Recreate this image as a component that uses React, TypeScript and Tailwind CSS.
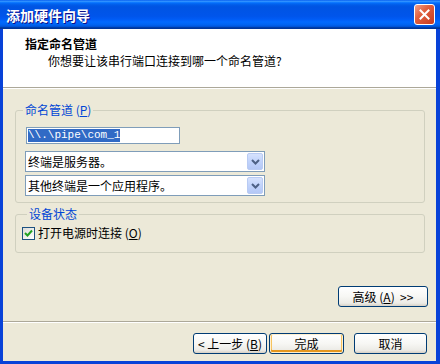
import React from "react";

const font = { fontFamily: '"Noto Sans CJK SC", "Noto Sans", sans-serif' };

function Btn({ children, w, def }: { children: React.ReactNode; w: string; def?: boolean }) {
  return (
    <div
      className={`${w} h-[21px] flex items-center justify-center rounded-[3px] border border-[#003C74] bg-[linear-gradient(to_bottom,#FFFFFF_0%,#F7F7F4_50%,#ECEBE6_85%,#D6D0C5_100%)] text-[12px] leading-[14px] text-black ${
        def ? "shadow-[inset_0_0_0_1px_#FFF0CF,inset_0_-2px_0_1px_#E5971F,inset_2px_0_0_0_#F6C35F,inset_-2px_0_0_0_#F6C35F]" : ""
      }`}
    >
      {children}
    </div>
  );
}

function Combo({ text }: { text: string }) {
  return (
    <div className="w-[240px] h-[21px] border border-[#7F9DB9] bg-white flex items-center justify-between pl-[2px] pr-[1px]">
      <span className="text-[12px] leading-[14px] text-black">{text}</span>
      <div className="w-[16px] h-[17px] rounded-[2px] border border-[#B9CBF3] bg-[linear-gradient(to_bottom,#D6E2FD_0%,#C1D3FB_50%,#B4C8F6_100%)] flex items-center justify-center">
        <svg width="9" height="6" viewBox="0 0 9 6">
          <path d="M1 1 L4.5 4.5 L8 1" stroke="#4D6185" strokeWidth="2" fill="none" />
        </svg>
      </div>
    </div>
  );
}

export default function App() {
  return (
    <div className="w-[440px] h-[364px] flex flex-col bg-[#0842D8]" style={font}>
      {/* Title bar */}
      <div className="h-[29px] flex items-center justify-between pl-[6px] pr-[5px] bg-[linear-gradient(to_bottom,#0058EE_0%,#3593FF_4%,#288EFF_6%,#127DFF_8%,#036FFC_10%,#0262EE_14%,#0057E5_20%,#0054E3_24%,#0055EB_56%,#005BF5_66%,#026AFE_76%,#0062EF_86%,#0052D6_92%,#0040AB_94%,#003092_100%)]">
        <span className="text-white font-bold text-[14px] leading-[16px] [text-shadow:1px_1px_#0F1089]">添加硬件向导</span>
        <div className="w-[21px] h-[21px] rounded-[3px] border border-white bg-[linear-gradient(135deg,#F0A08A_0%,#E0603F_40%,#C8391E_100%)] flex items-center justify-center">
          <svg width="11" height="11" viewBox="0 0 11 11">
            <path d="M1.5 1.5 L9.5 9.5 M9.5 1.5 L1.5 9.5" stroke="white" strokeWidth="2" strokeLinecap="square" />
          </svg>
        </div>
      </div>

      {/* Client */}
      <div className="flex-1 ml-[3px] mr-[4px] mb-[3px] bg-[#ECE9D8] flex flex-col">
        {/* Header */}
        <div className="h-[58px] bg-white pl-[22px] pt-[7px] flex flex-col">
          <div className="text-[12px] leading-[16px] font-bold text-black">指定命名管道</div>
          <div className="text-[12px] leading-[16px] text-black ml-[23px] mt-[1px]">你想要让该串行端口连接到哪一个命名管道?</div>
        </div>
        <div className="h-[1px] bg-[#ACA899]" />
        <div className="h-[1px] bg-white" />

        {/* Group 1 */}
        <fieldset className="mt-[14px] ml-[12px] mr-[11px] border border-[#D0D0BF] rounded-[3px] pl-[10px] pb-[6px]">
          <legend className="ml-[-3px] px-[2px] text-[12px] leading-[14px] text-[#0046D5]">
            命名管道 (<u>P</u>)
          </legend>
          <div className="mt-[10px] w-[154px] h-[17px] border border-[#7F9DB9] bg-white flex items-center pl-[1px]">
            <span className="bg-[#316AC5] text-white text-[11px] leading-[13px]" style={{ fontFamily: '"Liberation Mono", monospace' }}>
              {"\\\\.\\pipe\\com_1"}
            </span>
          </div>
          <div className="mt-[7px] ml-[-1px]">
            <Combo text="终端是服务器。" />
          </div>
          <div className="mt-[3px] ml-[-1px]">
            <Combo text="其他终端是一个应用程序。" />
          </div>
        </fieldset>

        {/* Group 2 */}
        <fieldset className="mt-[4px] ml-[12px] mr-[11px] border border-[#D0D0BF] rounded-[3px] pl-[6px] pb-[12px]">
          <legend className="ml-[5px] px-[2px] text-[12px] leading-[14px] text-[#0046D5]">设备状态</legend>
          <div className="mt-[5px] flex items-center gap-[3px]">
            <div className="w-[13px] h-[13px] border border-[#1C5180] bg-[linear-gradient(135deg,#DCDCD7_0%,#FFFFFF_100%)] flex items-center justify-center">
              <svg width="9" height="9" viewBox="0 0 9 9">
                <path d="M1 4 L3.5 6.5 L8 1.5" stroke="#21A121" strokeWidth="2" fill="none" />
              </svg>
            </div>
            <span className="text-[12px] leading-[14px] text-black">
              打开电源时连接 (<u>O</u>)
            </span>
          </div>
        </fieldset>

        <div className="flex-1" />

        <div className="flex justify-end pr-[8px]">
          <Btn w="w-[90px]">
            高级 (<u>A</u>)&nbsp;&nbsp;&gt;&gt;
          </Btn>
        </div>

        <div className="mt-[14px] h-[1px] bg-[#ACA899]" />
        <div className="h-[1px] bg-white" />

        <div className="mt-[10px] mb-[7px] flex justify-end pr-[9px]">
          <Btn w="w-[74px]">
            &lt; 上一步 (<u>B</u>)
          </Btn>
          <div className="w-[2px]" />
          <Btn w="w-[75px]" def>
            完成
          </Btn>
          <div className="w-[10px]" />
          <Btn w="w-[73px]">取消</Btn>
        </div>
      </div>
    </div>
  );
}
